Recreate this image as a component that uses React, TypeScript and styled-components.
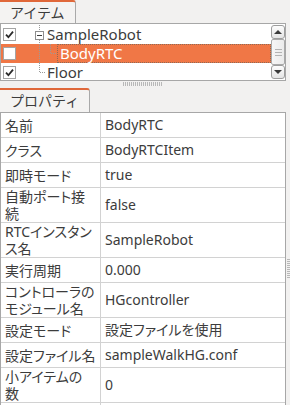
import styled, { createGlobalStyle } from "styled-components";

const GlobalStyle = createGlobalStyle`
  html, body {
    margin: 0;
    padding: 0;
    background: #f2f1f0;
  }
  body {
    font-family: "Noto Sans", "Noto Sans CJK JP", sans-serif;
    color: #3c3c3c;
  }
`;

type TreeKind = "expanded" | "child" | "last";

interface TreeItem {
  name: string;
  checked: boolean;
  kind: TreeKind;
  selected?: boolean;
}

const items: TreeItem[] = [
  { name: "SampleRobot", checked: true, kind: "expanded" },
  { name: "BodyRTC", checked: false, kind: "child", selected: true },
  { name: "Floor", checked: true, kind: "last" },
];

const properties: { label: string[]; value: string }[] = [
  { label: ["名前"], value: "BodyRTC" },
  { label: ["クラス"], value: "BodyRTCItem" },
  { label: ["即時モード"], value: "true" },
  { label: ["自動ポート接", "続"], value: "false" },
  { label: ["RTCインスタン", "ス名"], value: "SampleRobot" },
  { label: ["実行周期"], value: "0.000" },
  { label: ["コントローラの", "モジュール名"], value: "HGcontroller" },
  { label: ["設定モード"], value: "設定ファイルを使用" },
  { label: ["設定ファイル名"], value: "sampleWalkHG.conf" },
  { label: ["小アイテムの", "数"], value: "0" },
  { label: [""], value: "" },
];

function CheckMark() {
  return (
    <svg width="11" height="11" viewBox="0 0 11 11">
      <path d="M2 5.6 L4.4 8.2 L9 2.6" fill="none" stroke="#2b2b2b" strokeWidth="1.8" />
    </svg>
  );
}

function TreeGutter({ kind }: { kind: TreeKind }) {
  const dot = { stroke: "#9a9a9a", strokeDasharray: "1 1", strokeWidth: 1 };
  if (kind === "expanded") {
    return (
      <svg width="27" height="19" viewBox="0 0 27 19">
        <line x1="19.5" y1="0" x2="19.5" y2="6" {...dot} />
        <line x1="19.5" y1="15" x2="19.5" y2="19" {...dot} />
        <rect x="15.5" y="6.5" width="8" height="8" fill="#fff" stroke="#8e8e8e" />
        <line x1="17" y1="10.5" x2="22" y2="10.5" stroke="#3c3c3c" />
      </svg>
    );
  }
  if (kind === "child") {
    return (
      <svg width="37" height="19" viewBox="0 0 37 19">
        <line x1="19.5" y1="0" x2="19.5" y2="19" {...dot} />
        <line x1="30.5" y1="0" x2="30.5" y2="9" {...dot} />
        <line x1="31" y1="9.5" x2="37" y2="9.5" {...dot} />
      </svg>
    );
  }
  return (
    <svg width="27" height="19" viewBox="0 0 27 19">
      <line x1="19.5" y1="0" x2="19.5" y2="9" {...dot} />
      <line x1="20" y1="9.5" x2="26" y2="9.5" {...dot} />
    </svg>
  );
}

export default function App() {
  return (
    <Window>
      <GlobalStyle />
      <Main>
        <TabBar $height={23}>
          <Tab>アイテム</Tab>
        </TabBar>
        <ListBox>
          <Rows>
            {items.map((item) => (
              <TreeRow key={item.name} $selected={item.selected}>
                <CheckCell>
                  <CheckBox>{item.checked && <CheckMark />}</CheckBox>
                </CheckCell>
                <TreeGutter kind={item.kind} />
                <ItemName $focused={item.selected}>{item.name}</ItemName>
              </TreeRow>
            ))}
          </Rows>
          <ScrollBar>
            <ScrollButton>
              <Arrow $up />
            </ScrollButton>
            <Thumb>
              <Grip />
              <Grip />
              <Grip />
            </Thumb>
            <ScrollButton>
              <Arrow />
            </ScrollButton>
          </ScrollBar>
        </ListBox>
        <Splitter>
          <HGrip />
        </Splitter>
        <TabBar $height={24}>
          <Tab>プロパティ</Tab>
        </TabBar>
        <Table>
          {properties.map((p, i) => (
            <PropRow key={i} $tall={p.label.length > 1}>
              <Label>
                {p.label.map((line, j) => (
                  <LabelLine key={j}>{line}</LabelLine>
                ))}
              </Label>
              <Value>{p.value}</Value>
            </PropRow>
          ))}
        </Table>
      </Main>
      <SideStrip>
        <VGrip />
      </SideStrip>
    </Window>
  );
}

const Window = styled.div`
  width: 290px;
  height: 405px;
  overflow: hidden;
  display: flex;
  background: #f2f1f0;
`;

const Main = styled.div`
  width: 286px;
  flex: none;
  display: flex;
  flex-direction: column;
`;

const TabBar = styled.div<{ $height: number }>`
  height: ${(p) => p.$height}px;
  flex: none;
  display: flex;
`;

const Tab = styled.div`
  box-sizing: border-box;
  height: 100%;
  padding: 0 10px 0 10px;
  display: flex;
  align-items: center;
  border-top: 2px solid #e0683a;
  border-right: 1px solid #a9a9a9;
  border-radius: 0 3px 0 0;
  background: #f4f3f2;
  font-size: 14px;
  line-height: 18px;
  color: #3c3c3c;
`;

const ListBox = styled.div`
  box-sizing: border-box;
  height: 58px;
  flex: none;
  border: 1px solid #a7a7a7;
  background: #fff;
  display: flex;
`;

const Rows = styled.div`
  flex: 1;
  padding-top: 1px;
  display: flex;
  flex-direction: column;
  overflow: hidden;
`;

const TreeRow = styled.div<{ $selected?: boolean }>`
  height: 19px;
  flex: none;
  display: flex;
  align-items: stretch;
  background: ${(p) => (p.$selected ? "#f07746" : "transparent")};
  color: ${(p) => (p.$selected ? "#ffffff" : "#3c3c3c")};
  font-size: 15px;
  line-height: 15px;
`;

const CheckCell = styled.div`
  width: 19px;
  display: flex;
  align-items: center;
`;

const CheckBox = styled.div`
  box-sizing: border-box;
  width: 13px;
  height: 13px;
  margin-left: 2px;
  border: 1px solid #a4a4a4;
  background: #fff;
  display: flex;
  align-items: center;
  justify-content: center;
`;

const ItemName = styled.div<{ $focused?: boolean }>`
  flex: 1;
  box-sizing: border-box;
  display: flex;
  align-items: center;
  padding-left: ${(p) => (p.$focused ? 2 : 0)}px;
  border: 1px dotted ${(p) => (p.$focused ? "#8f6a55" : "transparent")};
  border-left-width: ${(p) => (p.$focused ? 1 : 0)}px;
`;

const ScrollBar = styled.div`
  width: 14px;
  flex: none;
  padding: 1px 0;
  display: flex;
  flex-direction: column;
`;

const ScrollButton = styled.div`
  box-sizing: border-box;
  height: 14px;
  border: 1px solid #9d9d9d;
  border-radius: 3px;
  background: linear-gradient(#fdfdfd, #e4e4e4);
  display: flex;
  align-items: center;
  justify-content: center;
`;

const Arrow = styled.div<{ $up?: boolean }>`
  width: 0;
  height: 0;
  border-left: 4px solid transparent;
  border-right: 4px solid transparent;
  ${(p) =>
    p.$up ? "border-bottom: 4px solid #3a3a3a;" : "border-top: 4px solid #3a3a3a;"}
`;

const Thumb = styled.div`
  box-sizing: border-box;
  flex: 1;
  border: 1px solid #a9a9a9;
  border-radius: 2px;
  background: linear-gradient(90deg, #f6f6f6, #ebebeb);
  display: flex;
  flex-direction: column;
  align-items: center;
  justify-content: center;
  gap: 2px;
`;

const Grip = styled.div`
  width: 7px;
  height: 1px;
  background: #b3b3b3;
`;

const Splitter = styled.div`
  height: 7px;
  flex: none;
  display: flex;
  justify-content: center;
  padding-top: 1px;
  box-sizing: border-box;
`;

const HGrip = styled.div`
  width: 40px;
  height: 4px;
  background: repeating-linear-gradient(90deg, #b8b8b8 0 1px, transparent 1px 2px);
`;

const Table = styled.div`
  flex: 1;
  border: 1px solid #a7a7a7;
  border-bottom: none;
  background: #fff;
  overflow: hidden;
`;

const PropRow = styled.div<{ $tall?: boolean }>`
  box-sizing: border-box;
  height: ${(p) => (p.$tall ? 35 : 25)}px;
  display: grid;
  grid-template-columns: 100px 1fr;
  border-bottom: 1px solid #d2d2d2;
`;

const Label = styled.div`
  box-sizing: border-box;
  border-right: 1px solid #d2d2d2;
  padding-left: 4px;
  display: flex;
  flex-direction: column;
  justify-content: center;
  font-size: 14px;
  font-feature-settings: "palt";
  white-space: nowrap;
  overflow: hidden;
`;

const LabelLine = styled.span`
  display: block;
  height: 17px;
  line-height: 17px;
`;

const Value = styled.div`
  padding-left: 4px;
  display: flex;
  align-items: center;
  font-size: 14px;
  line-height: 18px;
  font-feature-settings: "palt";
  white-space: nowrap;
  overflow: hidden;
`;

const SideStrip = styled.div`
  flex: 1;
  display: flex;
  justify-content: flex-end;
  padding-top: 259px;
`;

const VGrip = styled.div`
  width: 3px;
  height: 20px;
  background: repeating-linear-gradient(180deg, #b8b8b8 0 1px, transparent 1px 2px);
`;
